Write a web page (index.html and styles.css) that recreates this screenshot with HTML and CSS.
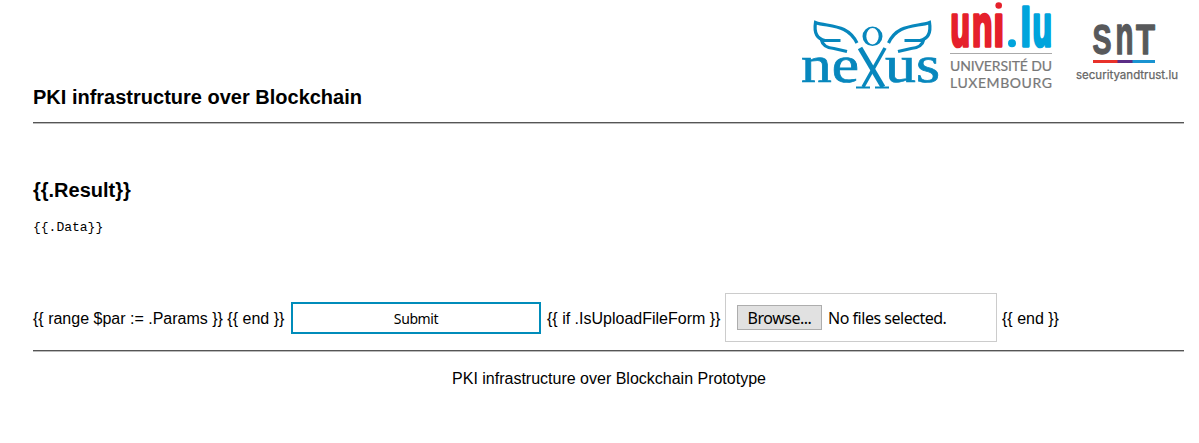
FILE: index.html
```html
<!DOCTYPE html>
<html lang="en">
<head>
<meta charset="utf-8">
<title>PKI infrastructure over Blockchain</title>
<link rel="stylesheet" href="styles.css">
</head>
<body>
<header class="header">
  <h1 class="title">PKI infrastructure over Blockchain</h1>
  <div class="logos">
    <svg class="logo-nexus" width="145" height="100" viewBox="798 0 145 100" role="img" aria-label="nexus">
      <g fill="none" stroke="#0787bd" stroke-width="3.2">
        <path d="M857 43C850 29 839 27 827 25Q819 24 815.500 22.500Q813 38 825 40.500H840.500M821 39Q823 48 834 48.500L847 51.500"/>
        <path d="M888.500 43C895 29 906 27 918 25Q926 24 929.500 22.500Q932 38 920 40.500H904.500M924 39Q922 48 911 48.500L898 51.500"/>
        <path d="M860 48L883 87" stroke-width="5"/>
        <path d="M885 48L863 87" stroke-width="3.500"/>
        <path d="M856 87.500H870M875 87.500H889" stroke-width="1.800"/>
      </g>
      <path fill="#0787bd" fill-rule="evenodd" d="M862.500 36.300a10 9.700 0 1 0 20 0a10 9.700 0 1 0-20 0zM866.300 36.300a6.200 8.200 0 1 1 12.400 0a6.200 8.200 0 1 1-12.400 0z"/>
      <g class="nexus-text">
        <text x="801" y="82" textLength="58" lengthAdjust="spacingAndGlyphs">ne</text>
        <text x="885" y="82" textLength="55" lengthAdjust="spacingAndGlyphs">us</text>
      </g>
    </svg>
    <svg class="logo-uni" width="117" height="100" viewBox="943 0 117 100" role="img" aria-label="uni.lu Université du Luxembourg">
      <g class="uni-mark">
        <text class="red" transform="translate(950.500 45.500) scale(1 1.650)" textLength="19.500" lengthAdjust="spacingAndGlyphs">u</text>
        <text class="red" transform="translate(972 45.500) scale(1 1.650)" textLength="20.500" lengthAdjust="spacingAndGlyphs">n</text>
        <text class="red" transform="translate(993.500 45.500) scale(1 1.650)" textLength="10.500" lengthAdjust="spacingAndGlyphs">ı</text>
        <text class="blue" transform="translate(1020.500 45.500) scale(1 1.500)" textLength="10.500" lengthAdjust="spacingAndGlyphs">l</text>
        <text class="blue" transform="translate(1032.500 45.500) scale(1 1.650)" textLength="19.500" lengthAdjust="spacingAndGlyphs">u</text>
      </g>
      <circle cx="998.700" cy="5.500" r="3.300" fill="#e5202b"/>
      <circle cx="1012" cy="43.200" r="4" fill="#00a4dc"/>
      <path d="M950 53.500H1052" stroke="#aaa"/>
      <g class="uni-name">
        <text x="950" y="70.500" textLength="102">UNIVERSITÉ DU</text>
        <text x="950" y="87.500" textLength="102">LUXEMBOURG</text>
      </g>
    </svg>
    <svg class="logo-snt" width="124" height="100" viewBox="1060 0 124 100" role="img" aria-label="SnT securityandtrust.lu">
      <g class="snt-mark">
        <text transform="translate(1092.500 53.500) scale(1 1.450)" textLength="19" lengthAdjust="spacingAndGlyphs">S</text>
        <text transform="translate(1115.500 53.500) scale(1 1.900)" textLength="18" lengthAdjust="spacingAndGlyphs">n</text>
        <text transform="translate(1136 53.500) scale(1 1.450)" textLength="19" lengthAdjust="spacingAndGlyphs">T</text>
      </g>
      <path d="M1093 61.500H1118" stroke="#e8312a" stroke-width="3"/>
      <path d="M1117.500 61.500H1133" stroke="#5b2d86" stroke-width="3"/>
      <path d="M1132.500 61.500H1155" stroke="#1993d1" stroke-width="3"/>
      <text class="snt-url" x="1076" y="79" textLength="102">securityandtrust.lu</text>
    </svg>
  </div>
</header>
<main>
  <h2 class="result">{{.Result}}</h2>
  <pre class="data">{{.Data}}</pre>
  <form class="form">
    <span class="params">{{ range $par := .Params }} {{ end }}</span>
    <button class="submit" type="button">Submit</button>
    <span class="condition">{{ if .IsUploadFileForm }}</span>
    <div class="upload">
      <button class="browse" type="button">Browse...</button>
      <span class="files">No files selected.</span>
    </div>
    <span class="end">{{ end }}</span>
  </form>
</main>
<footer class="footer">PKI infrastructure over Blockchain Prototype</footer>
</body>
</html>
```
FILE: styles.css
```css
body {
  margin: 0;
  padding: 0 15px 0 33px;
  background: #fff;
  color: #000;
  font: 16px/20px "Liberation Sans", Arial, sans-serif;
}
.header {
  display: flex;
  justify-content: space-between;
  height: 122px;
  border-bottom: 1px solid #555;
  box-shadow: 0 1px #bbb;
}
.title {
  margin: 85px 0 0;
  font-size: 20px;
  line-height: 24px;
}
.logos { display: flex; }
.logos svg { display: block; overflow: visible; }
.nexus-text {
  fill: #0787bd;
  stroke: #0787bd;
  stroke-width: .7px;
  font: 53px "Liberation Serif", serif;
}
.uni-mark {
  font: bold 36px "Liberation Sans", Arial, sans-serif;
  stroke-width: 2.2px;
  stroke-linejoin: round;
}
.red { fill: #e5202b; stroke: #e5202b; }
.blue { fill: #00a4dc; stroke: #00a4dc; }
.uni-name {
  fill: #777;
  stroke: #777;
  stroke-width: .2px;
  font: 14px Lato, sans-serif;
}
.snt-mark {
  fill: #58595b;
  stroke: #58595b;
  stroke-width: .9px;
  stroke-linejoin: round;
  font: bold 29px "Liberation Sans", Arial, sans-serif;
}
.snt-url {
  fill: #666;
  stroke: #666;
  stroke-width: .25px;
  font: 11.5px Inter, sans-serif;
}
.result {
  margin: 55px 0 0;
  font-size: 20px;
  line-height: 24px;
}
.data {
  margin: 18px 0 0;
  font: 13px/16px "Liberation Mono", monospace;
}
.form {
  display: flex;
  align-items: center;
  height: 49px;
  margin: 57px 0 8px;
  white-space: nowrap;
}
.params, .condition, .end { padding-top: 2px; }
.params { width: 258px; }
.submit {
  box-sizing: border-box;
  width: 250px;
  height: 32px;
  margin-right: 6px;
  padding: 2px 0 0;
  border: 2px solid #008cba;
  background: #fff;
  color: #000;
  font: 14px "Noto Sans", sans-serif;
  letter-spacing: -.4px;
}
.condition { width: 178px; }
.upload {
  display: flex;
  align-items: center;
  box-sizing: border-box;
  width: 272px;
  height: 49px;
  margin-right: 5px;
  padding-left: 11px;
  border: 1px solid #ccc;
  font: 16px/20px "Noto Sans", sans-serif;
  letter-spacing: -.48px;
}
.browse {
  box-sizing: border-box;
  width: 85px;
  height: 25px;
  margin-right: 6px;
  padding: 0;
  border: 1px solid #adadad;
  background: #e1e1e1;
  color: #000;
  font: inherit;
  letter-spacing: inherit;
}
.footer {
  padding: 18px 0 0 1px;
  border-top: 1px solid #555;
  box-shadow: inset 0 1px #bbb;
  text-align: center;
}
```
